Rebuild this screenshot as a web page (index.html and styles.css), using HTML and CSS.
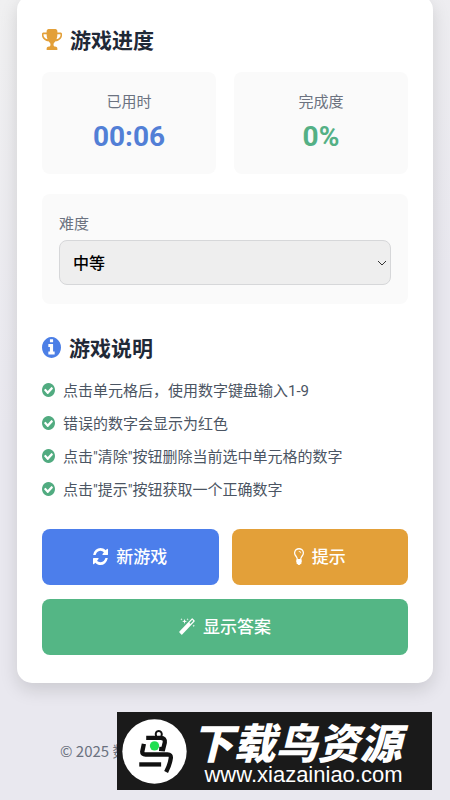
FILE: index.html
```html
<!DOCTYPE html>
<html lang="zh-CN">
<head>
<meta charset="utf-8">
<meta name="viewport" content="width=device-width, initial-scale=1">
<title>数独游戏</title>
<link rel="stylesheet" href="styles.css">
</head>
<body>
<svg class="sprite" aria-hidden="true">
  <symbol id="check" viewBox="128 128 1536 1536" preserveAspectRatio="none"><path d="M1412 734q0-28-18-46l-91-90q-19-19-45-19t-45 19l-408 407-226-226q-19-19-45-19t-45 19l-91 90q-18 18-18 46 0 27 18 45l362 362q19 19 45 19 27 0 46-19l543-543q18-18 18-45zm252 162q0 209-103 385.5t-279.5 279.5-385.5 103-385.5-103-279.5-279.5-103-385.5 103-385.5 279.5-279.5 385.5-103 385.5 103 279.5 279.5 103 385.5z"/></symbol>
</svg>
<main class="card">
  <section>
    <h2 class="title">
      <svg class="icon-trophy" viewBox="64 128 1664 1536" preserveAspectRatio="none" aria-hidden="true"><path d="M522 883q-74-162-74-371h-256v96q0 78 94.5 162t235.5 113zm1078-275v-96h-256q0 209-74 371 141-29 235.5-113t94.5-162zm128-128v128q0 71-41.5 143t-112 130-173 97.5-215.5 44.5q-42 54-95 95-38 34-52.5 72.5t-14.5 89.5q0 54 30.5 91t97.5 37q75 0 133.5 45.5t58.5 114.5v64q0 14-9 23t-23 9h-832q-14 0-23-9t-9-23v-64q0-69 58.5-114.5t133.5-45.5q67 0 97.5-37t30.5-91q0-51-14.5-89.5t-52.5-72.5q-53-41-95-95-113-5-215.5-44.5t-173-97.5-112-130-41.5-143v-128q0-40 28-68t68-28h288v-96q0-66 47-113t113-47h576q66 0 113 47t47 113v96h288q40 0 68 28t28 68z"/></svg>
      游戏进度
    </h2>
    <div class="stats">
      <div class="panel stat"><span class="label">已用时</span><strong class="value time">00:06</strong></div>
      <div class="panel stat"><span class="label">完成度</span><strong class="value done">0%</strong></div>
    </div>
    <div class="panel difficulty">
      <label class="label" for="level">难度</label>
      <div class="select-wrap">
        <select id="level"><option>中等</option></select>
        <svg class="chevron" viewBox="0 0 10 6" aria-hidden="true"><path d="M1 1l4 4 4-4"/></svg>
      </div>
    </div>
  </section>
  <section class="guide">
    <h2 class="title">
      <svg class="icon-info" viewBox="128 128 1536 1536" preserveAspectRatio="none" aria-hidden="true"><path d="M1152 1376v-160q0-14-9-23t-23-9h-96v-512q0-14-9-23t-23-9h-320q-14 0-23 9t-9 23v160q0 14 9 23t23 9h96v320h-96q-14 0-23 9t-9 23v160q0 14 9 23t23 9h448q14 0 23-9t9-23zm-128-896v-160q0-14-9-23t-23-9h-192q-14 0-23 9t-9 23v160q0 14 9 23t23 9h192q14 0 23-9t9-23zm640 416q0 209-103 385.5t-279.5 279.5-385.5 103-385.5-103-279.5-279.5-103-385.5 103-385.5 279.5-279.5 385.5-103 385.5 103 279.5 279.5 103 385.5z"/></svg>
      游戏说明
    </h2>
    <ul class="rules">
      <li><svg class="tick" aria-hidden="true"><use href="#check"/></svg>点击单元格后，使用数字键盘输入1-9</li>
      <li><svg class="tick" aria-hidden="true"><use href="#check"/></svg>错误的数字会显示为红色</li>
      <li><svg class="tick" aria-hidden="true"><use href="#check"/></svg>点击"清除"按钮删除当前选中单元格的数字</li>
      <li><svg class="tick" aria-hidden="true"><use href="#check"/></svg>点击"提示"按钮获取一个正确数字</li>
    </ul>
  </section>
  <div class="actions">
    <button class="new" type="button">
      <svg class="icon-refresh" viewBox="128 128 1536 1536" preserveAspectRatio="none" aria-hidden="true"><path d="M1639 1056q0 5-1 7-64 268-268 434.5t-478 166.5q-146 0-282.5-55t-243.5-157l-129 129q-19 19-45 19t-45-19-19-45v-448q0-26 19-45t45-19h448q26 0 45 19t19 45-19 45l-137 137q71 66 161 102t187 36q134 0 250-65t186-179q11-17 53-117 8-23 30-23h192q13 0 22.5 9.5t9.5 22.5zm25-800v448q0 26-19 45t-45 19h-448q-26 0-45-19t-19-45 19-45l138-138q-148-137-349-137-134 0-250 65t-186 179q-11 17-53 117-8 23-30 23h-199q-13 0-22.5-9.5t-9.5-22.5v-7q65-268 270-434.5t480-166.5q146 0 284 55.5t245 156.5l130-129q19-19 45-19t45 19 19 45z"/></svg>
      新游戏
    </button>
    <button class="hint" type="button">
      <svg class="icon-bulb" viewBox="384 128 1024 1536" preserveAspectRatio="none" aria-hidden="true"><path d="M1120 576q0 13-9.5 22.5t-22.5 9.5-22.5-9.5-9.5-22.5q0-46-54-71t-106-25q-13 0-22.5-9.5t-9.5-22.5 9.5-22.5 22.5-9.5q50 0 99.5 16t87 54 37.5 90zm160 0q0-72-34.5-134t-90-101.5-123-62-136.5-22.5-136.5 22.5-123 62-90 101.5-34.5 134q0 101 68 180 10 11 30.5 33t30.5 33q128 153 141 298h228q13-145 141-298 10-11 30.5-33t30.5-33q68-79 68-180zm128 0q0 155-103 268-45 49-74.5 87t-59.5 95.5-34 107.5q47 28 47 82 0 37-25 64 25 27 25 64 0 52-45 81 13 23 13 47 0 46-31.5 71t-77.5 25q-20 44-60 70t-87 26-87-26-60-70q-46 0-77.5-25t-31.5-71q0-24 13-47-45-29-45-81 0-37 25-64-25-27-25-64 0-54 47-82-4-50-34-107.5t-59.5-95.5-74.5-87q-103-113-103-268 0-99 44.5-184.5t117-142 164-89 186.5-32.5 186.5 32.5 164 89 117 142 44.5 184.5z"/></svg>
      提示
    </button>
    <button class="answer" type="button">
      <svg class="icon-magic" viewBox="64 0 1664 1664" preserveAspectRatio="none" aria-hidden="true"><path d="M1254 581l293-293-107-107-293 293zm447-293q0 27-18 45l-1286 1286q-18 18-45 18t-45-18l-198-198q-18-18-18-45t18-45l1286-1286q18-18 45-18t45 18l198 198q18 18 18 45zm-1351-190l98 30-98 30-30 98-30-98-98-30 98-30 30-98zm350 162l196 60-196 60-60 196-60-196-196-60 196-60 60-196zm930 478l98 30-98 30-30 98-30-98-98-30 98-30 30-98zm-640-640l98 30-98 30-30 98-30-98-98-30 98-30 30-98z"/></svg>
      显示答案
    </button>
  </div>
</main>
<footer class="footer">© 2025 数</footer>
<aside class="watermark">
  <svg class="bird" viewBox="36 44 196 196" aria-hidden="true">
    <circle cx="134" cy="142" r="97" fill="#fff"/>
    <g fill="none" stroke="#111" stroke-width="13">
      <path d="M139 96c-8-21 23-22 16 0" stroke-width="6"/>
      <path d="M109 101h44q14 0 12 14l-5 20-12-1"/>
      <path d="M102 119l-5 24q0 8 10 8h66q12 0 10 12-3 20-14 41"/>
      <path d="M88 181h66"/>
    </g>
    <circle cx="134" cy="125" r="14" fill="#20df50"/>
  </svg>
  <div class="brand"><strong>下载鸟资源</strong><span>www.xiazainiao.com</span></div>
</aside>
</body>
</html>
```
FILE: styles.css
```css
* { box-sizing: border-box; }
body {
  margin: 0;
  position: relative;
  min-height: 100vh;
  overflow: hidden;
  padding: 0 17px;
  background: linear-gradient(160deg, #f0f0f1, #e9e8ef 45%, #e9e8ef);
  font-family: "Noto Sans CJK SC", sans-serif;
  color: #4b5563;
}
.sprite { position: absolute; width: 0; height: 0; }
svg { flex: none; fill: currentColor; }
.card {
  margin-top: -5px;
  padding: 28px 25px;
  border-radius: 15px;
  background: #fff;
  box-shadow: 0 7px 18px rgba(0, 0, 0, .13);
}
.title {
  display: flex;
  align-items: center;
  gap: 8px;
  margin: 0;
  height: 32px;
  font-size: 21px;
  line-height: 32px;
  font-weight: 700;
  color: #1f2937;
}
.icon-trophy { width: 20px; height: 21px; color: #e3a039; }
.icon-info { width: 19px; height: 21px; color: #4c7fe6; }
.panel { background: #fafafa; border-radius: 8px; }
.stats {
  display: grid;
  grid-template-columns: 1fr 1fr;
  gap: 18px;
  margin: 17px 0 20px;
}
.stat {
  display: flex;
  flex-direction: column;
  align-items: center;
  padding: 16px 17px 13px;
}
.label { font-size: 15px; line-height: 25px; color: #6b7280; }
.value { font: 700 28px/48px Roboto, sans-serif; }
.time { color: #527fd6; }
.done { color: #54b085; }
.difficulty { padding: 16px 17px 19px; }
.difficulty .label { display: block; }
.select-wrap { position: relative; margin-top: 5px; }
select {
  appearance: none;
  display: block;
  width: 100%;
  height: 45px;
  padding: 0 13px 2px;
  border: 1px solid #d6d7d9;
  border-radius: 8px;
  background: #eee;
  font: 500 16px/24px "Noto Sans CJK SC", sans-serif;
  color: #000;
}
.chevron {
  position: absolute;
  right: 4px;
  top: 20px;
  width: 10px;
  height: 6px;
  fill: none;
  stroke: #333;
}
.guide { margin-top: 27px; }
.rules { list-style: none; margin: 10px 0 24px; padding: 0; }
.rules li {
  display: flex;
  align-items: center;
  gap: 8px;
  height: 33px;
  font-family: Roboto, "Noto Sans CJK SC", sans-serif;
  font-size: 15px;
  white-space: nowrap;
}
.tick { width: 13px; height: 14px; color: #51ab80; }
.actions { display: grid; grid-template-columns: 1fr 1fr; gap: 14px 13px; }
button {
  display: flex;
  align-items: center;
  justify-content: center;
  gap: 8px;
  height: 56px;
  padding: 0 0 2px;
  border: 0;
  border-radius: 8px;
  font: 500 17px/26px "Noto Sans CJK SC", sans-serif;
  color: #fff;
}
.new { background: #4c7eeb; }
.hint { background: #e3a039; }
.answer { grid-column: 1 / -1; background: #54b685; }
.icon-refresh { width: 15px; height: 17px; }
.icon-bulb { width: 10px; height: 17px; }
.icon-magic { width: 16px; height: 17px; }
.footer { margin-top: 55px; padding-left: 43px; font-size: 15px; line-height: 26px; color: #6b7280; }
.watermark {
  position: absolute;
  right: 18px;
  bottom: 10px;
  display: flex;
  align-items: center;
  width: 315px;
  height: 78px;
  padding-left: 5px;
  background: #1a1a1a;
  color: #fff;
}
.bird { width: 65px; height: 65px; }
.brand {
  display: flex;
  flex: 1;
  flex-direction: column;
  align-items: center;
  padding: 6px 26px 0 0;
  white-space: nowrap;
}
.brand strong { font-size: 42px; line-height: 42px; font-weight: 900; font-style: italic; }
.brand span { padding-left: 14px; font: 22px/26px "Liberation Sans", sans-serif; }
```
